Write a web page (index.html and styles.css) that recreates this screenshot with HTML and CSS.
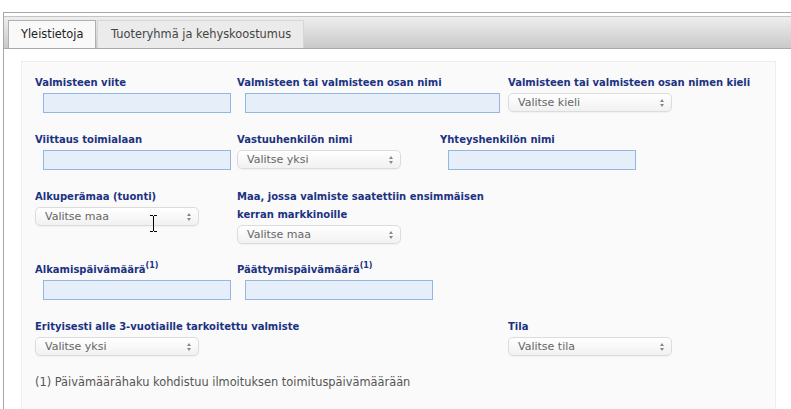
FILE: index.html
```html
<!DOCTYPE html>
<html lang="fi">
<head>
    <meta charset="UTF-8">
    <title>Yleistietoja</title>
    <link rel="stylesheet" href="styles.css">
</head>
<body>
    <div class="frame">
        <div class="tabbar">
            <div class="tab active">Yleistietoja</div>
            <div class="tab">Tuoteryhmä ja kehyskoostumus</div>
        </div>

        <div class="panel">
            <div class="row">
                <div class="field w202">
                    <label>Valmisteen viite</label>
                    <input type="text" class="text w188">
                </div>
                <div class="field w271">
                    <label>Valmisteen tai valmisteen osan nimi</label>
                    <input type="text" class="text w255">
                </div>
                <div class="field">
                    <label>Valmisteen tai valmisteen osan nimen kieli</label>
                    <div class="select"><span>Valitse kieli</span><i class="arrows"></i></div>
                </div>
            </div>

            <div class="row">
                <div class="field w202">
                    <label>Viittaus toimialaan</label>
                    <input type="text" class="text w188">
                </div>
                <div class="field w203">
                    <label>Vastuuhenkilön nimi</label>
                    <div class="select"><span>Valitse yksi</span><i class="arrows"></i></div>
                </div>
                <div class="field">
                    <label>Yhteyshenkilön nimi</label>
                    <input type="text" class="text w188">
                </div>
            </div>

            <div class="row">
                <div class="field w202">
                    <label>Alkuperämaa (tuonti)</label>
                    <div class="select"><span>Valitse maa</span><i class="arrows"></i></div>
                </div>
                <div class="field w255">
                    <label>Maa, jossa valmiste saatettiin ensimmäisen kerran markkinoille</label>
                    <div class="select"><span>Valitse maa</span><i class="arrows"></i></div>
                </div>
            </div>

            <div class="row">
                <div class="field w202">
                    <label>Alkamispäivämäärä<sup>(1)</sup></label>
                    <input type="text" class="text w188">
                </div>
                <div class="field">
                    <label>Päättymispäivämäärä<sup>(1)</sup></label>
                    <input type="text" class="text w188">
                </div>
            </div>

            <div class="row">
                <div class="field w473">
                    <label>Erityisesti alle 3-vuotiaille tarkoitettu valmiste</label>
                    <div class="select"><span>Valitse yksi</span><i class="arrows"></i></div>
                </div>
                <div class="field">
                    <label>Tila</label>
                    <div class="select"><span>Valitse tila</span><i class="arrows"></i></div>
                </div>
            </div>

            <p class="note">(1) Päivämäärähaku kohdistuu ilmoituksen toimituspäivämäärään</p>
        </div>
    </div>

    <svg class="cursor" width="9" height="17" viewBox="0 0 9 17">
        <path d="M1 0.5h3M5 0.5h3M4.5 1v15M1 16.5h3M5 16.5h3" stroke="#000" stroke-width="1" fill="none"/>
    </svg>
</body>
</html>
```

FILE: styles.css
```css
body {
    margin: 0;
    background-color: #fff;
    font-family: "DejaVu Sans", Verdana, sans-serif;
    overflow: hidden;
}

.frame {
    margin: 12px 0 0 3px;
    padding-top: 3px;
    border: 1px solid #a8a8a8;
    border-right: none;
    height: 420px;
}

.tabbar {
    display: flex;
    height: 28px;
    padding: 3px 0 0 4px;
    border-top: 1px solid #c4c4c4;
    border-bottom: 1px solid #a9a9a9;
    background: linear-gradient(#eeeeee, #c9c9c9);
}

.tab {
    height: 27px;
    line-height: 26px;
    padding: 0 12px 0 13px;
    font-size: 11.4px;
    color: #444;
    background-color: #ebebeb;
    border: 1px solid #d6d6d6;
    border-bottom: none;
}

.tab.active {
    width: 62px;
    padding: 0 12px;
    color: #222;
    background-color: #f9f9f9;
    border-color: #b0b0b0;
    margin-right: 1px;
}

.panel {
    margin: 12px 15px 0 17px;
    padding: 12px 0 0 13px;
    height: 400px;
    background-color: #fafafa;
    border: 1px solid #eeeeee;
    border-bottom: none;
}

.row {
    display: flex;
    align-items: flex-start;
    margin-bottom: 17px;
}

.field {
    display: flex;
    flex-direction: column;
    align-items: flex-start;
}

.w202 { width: 202px; }
.w203 { width: 203px; }
.w255 { width: 255px; }
.w271 { width: 271px; }
.w473 { width: 473px; }

label {
    font-size: 10px;
    font-weight: bold;
    line-height: 18px;
    color: #1c3282;
}

label sup {
    font-size: 8px;
    line-height: 0;
    vertical-align: baseline;
    position: relative;
    top: -5px;
}

.text {
    box-sizing: border-box;
    height: 20px;
    margin: 1px 0 1px 8px;
    border: 1px solid #92b7e0;
    background-color: #e6eef9;
    padding: 0 4px;
}

.w188 { width: 188px; }
.text.w255 { width: 255px; }

.select {
    box-sizing: border-box;
    width: 164px;
    height: 19px;
    margin-top: 1px;
    display: flex;
    align-items: center;
    justify-content: space-between;
    padding: 0 8px 0 9px;
    font-size: 11px;
    color: #666;
    border: 1px solid #dcdcdc;
    border-radius: 5px;
    background: linear-gradient(#ffffff, #f1f1f1);
    box-shadow: 0 1px 1px rgba(0, 0, 0, 0.04);
}

.arrows {
    width: 0;
    height: 8px;
    position: relative;
}

.arrows::before,
.arrows::after {
    content: "";
    position: absolute;
    left: -3px;
    border-left: 2.5px solid transparent;
    border-right: 2.5px solid transparent;
}

.arrows::before {
    top: 0;
    border-bottom: 3px solid #888;
}

.arrows::after {
    bottom: 0;
    border-top: 3px solid #888;
}

.note {
    margin: 0;
    font-size: 11.4px;
    line-height: 18px;
    color: #555;
}

.cursor {
    position: absolute;
    left: 149px;
    top: 215px;
}
```
